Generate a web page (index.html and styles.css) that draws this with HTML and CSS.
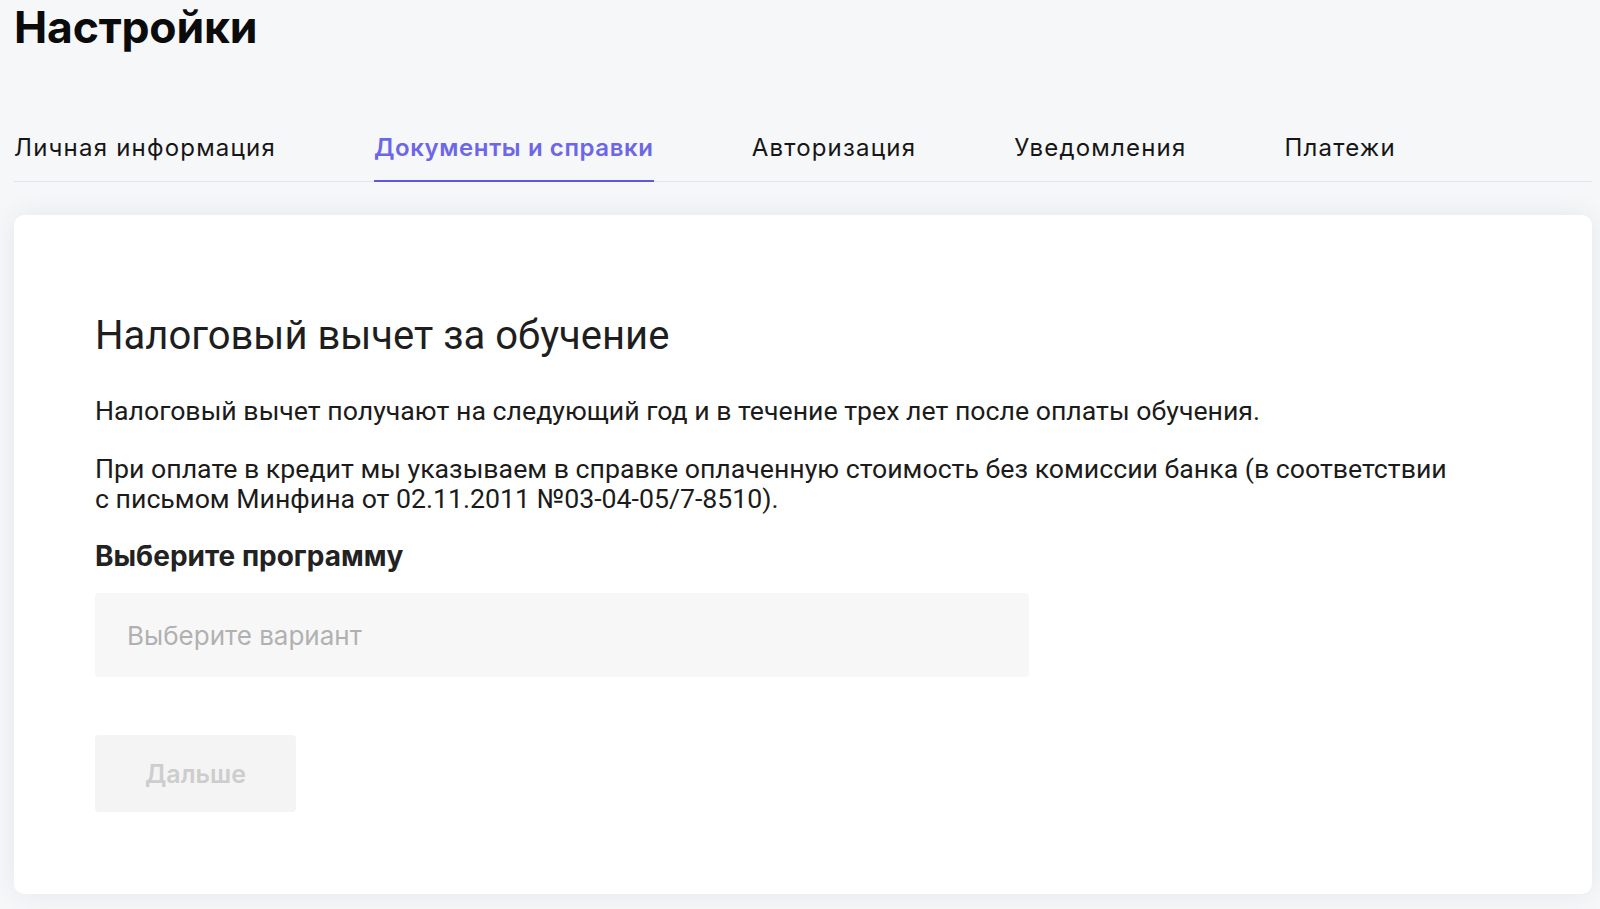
FILE: index.html
```html
<!DOCTYPE html>
<html lang="ru">
<head>
<meta charset="utf-8">
<title>Настройки</title>
<link rel="stylesheet" href="styles.css">
</head>
<body>
<div class="page">
  <h1 class="title">Настройки</h1>
  <nav class="tabs">
    <a class="tab">Личная информация</a>
    <a class="tab tab-active">Документы и справки</a>
    <a class="tab">Авторизация</a>
    <a class="tab">Уведомления</a>
    <a class="tab">Платежи</a>
  </nav>
  <section class="card">
    <h2 class="card-title">Налоговый вычет за обучение</h2>
    <p class="text">Налоговый вычет получают на следующий год и в течение трех лет после оплаты обучения.</p>
    <p class="text">При оплате в кредит мы указываем в справке оплаченную стоимость без комиссии банка (в соответствии с письмом Минфина от 02.11.2011 №03-04-05/7-8510).</p>
    <h3 class="label">Выберите программу</h3>
    <div class="select">Выберите вариант</div>
    <button class="btn" disabled>Дальше</button>
  </section>
</div>
</body>
</html>
```

FILE: styles.css
```css
* { box-sizing: border-box; }
html, body { margin: 0; padding: 0; }
body {
  background: #f6f7f9;
  font-family: Inter, "Noto Sans", sans-serif;
  color: #111;
  height: 909px;
  overflow: hidden;
}
.page {
  padding: 1px 8px 0 14px;
}
.title {
  margin: 0;
  font-size: 44.5px;
  font-weight: 700;
  line-height: 53px;
  letter-spacing: -0.2px;
  color: #0b0b0b;
}
.tabs {
  display: flex;
  gap: 98px;
  margin-top: 80px;
  border-bottom: 1px solid #e3e4e7;
}
.tab {
  font-size: 24px;
  line-height: 27px;
  letter-spacing: 1.2px;
  padding-bottom: 19px;
  color: #161616;
  border-bottom: 2px solid transparent;
  margin-bottom: -1px;
}
.tab-active {
  color: #6d66e6;
  font-weight: 600;
  letter-spacing: 0.6px;
  border-bottom-color: #5f58dc;
}
.card {
  margin-top: 33px;
  background: #fff;
  border-radius: 10px;
  box-shadow: 0 0 28px rgba(20, 30, 50, 0.07);
  padding: 97px 81px 81px 81px;
  height: 679px;
}
.card-title {
  margin: 0;
  font-family: Roboto, sans-serif;
  font-size: 40px;
  font-weight: 400;
  line-height: 48px;
  color: #1e1e1e;
}
.text {
  margin: 36px 0 0;
  font-family: Roboto, sans-serif;
  font-size: 26.7px;
  line-height: 30px;
  color: #1b1b1b;
  max-width: 1360px;
}
.text + .text { margin-top: 28px; }
.label {
  margin: 25px 0 0;
  font-size: 28px;
  font-weight: 700;
  line-height: 34px;
  color: #222;
}
.select {
  margin-top: 20px;
  width: 934px;
  height: 84px;
  background: #f7f7f7;
  border-radius: 4px;
  padding: 0 32px;
  display: flex;
  align-items: center;
  font-size: 26px;
  color: #b1b1b1;
}
.btn {
  display: block;
  margin-top: 58px;
  width: 201px;
  height: 77px;
  background: #f4f4f4;
  border: none;
  border-radius: 4px;
  font-family: Inter, sans-serif;
  font-size: 25px;
  font-weight: 600;
  color: #cdcdcd;
}
```
